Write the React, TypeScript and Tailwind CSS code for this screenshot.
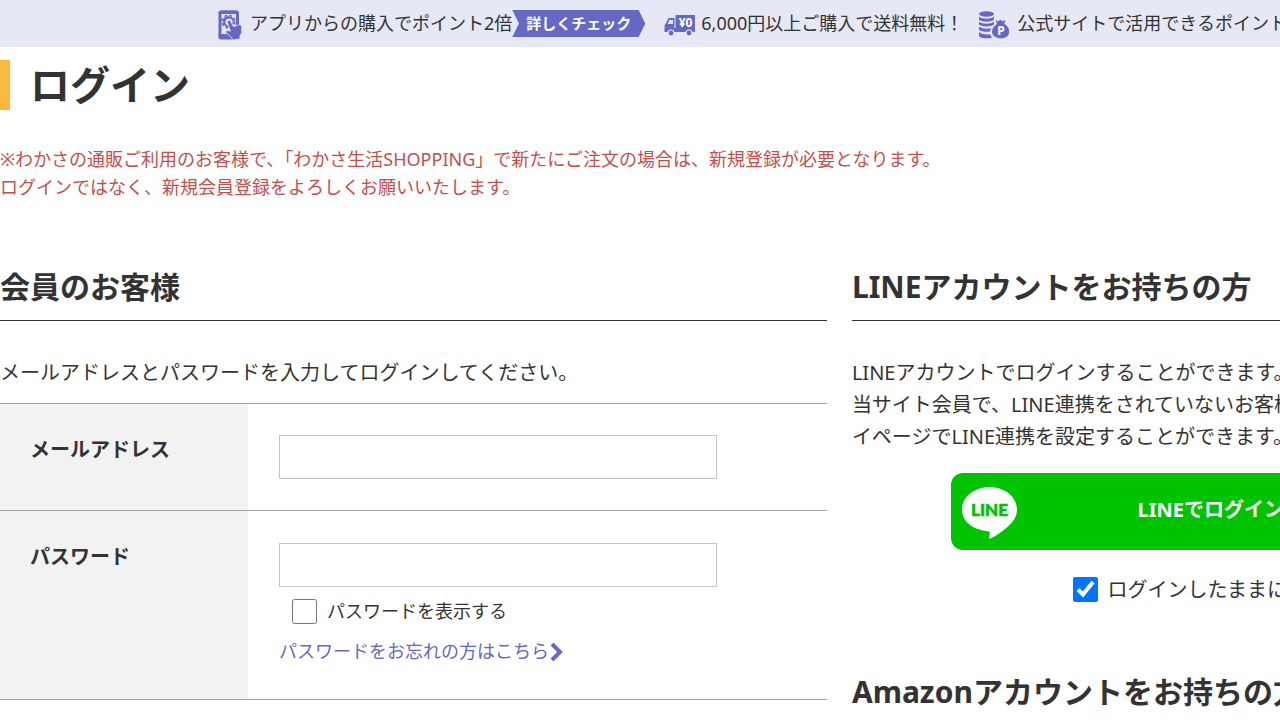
import React from 'react';

const PhoneIcon = () => (
  <svg className="h-8 w-6 shrink-0" viewBox="0 0 24 32" aria-hidden="true">
    <rect x="2" y="4" width="17.500" height="25" rx="2" fill="none" stroke="#6668c4" strokeWidth="3" />
    <path d="M.5 26h15v5.500H3A2.500 2.500 0 0 1 .5 29zM.5 5a2.500 2.500 0 0 1 2.500-2.500h15.500A2.500 2.500 0 0 1 21 5v1H.5z" fill="#6668c4" />
    <circle cx="10.500" cy="13.500" r="5.500" fill="#6668c4" />
    <circle cx="10.500" cy="13.500" r="6.300" fill="none" stroke="#6668c4" strokeWidth="1.600" strokeDasharray="3 1.950" />
    <circle cx="11" cy="14" r="3.600" fill="#e6e8f6" />
    <path
      fill="#6668c4"
      stroke="#e6e8f6"
      strokeWidth=".8"
      d="M9.700 13c.8-1.200 2.300-1 3 .2l2.700 5.300 6-1.800c1.300 0 2 .8 2.200 2l.2 6-1.800 3v3.300l-7 1-2-3-5-4.300c-.8-1.200.3-2.400 1.600-2.200l2.700.6-2.700-8c-.3-.8-.3-1.400.1-2.100z"
    />
  </svg>
);

const TruckIcon = () => (
  <svg className="h-8 w-8 shrink-0" viewBox="-1 0 32 32" aria-hidden="true">
    <path fill="#6668c4" d="M11.500 7H31v17H11.500z" />
    <path fill="#6668c4" d="M10.500 10v14H.5v-6.500l1-1.500 2.500-5a2 2 0 0 1 1.800-1z" />
    <path fill="#6668c4" d="M10 20h3v4h-3z" />
    <path fill="#e6e8f6" d="M5.500 12H9v4H3.500z" />
    <circle cx="7" cy="25" r="3" fill="#6668c4" stroke="#e6e8f6" strokeWidth="1.200" />
    <circle cx="25" cy="25" r="3" fill="#6668c4" stroke="#e6e8f6" strokeWidth="1.200" />
    <text
      x="21.500"
      y="18.500"
      fill="#ffffff"
      fontFamily="Noto Sans, sans-serif"
      fontSize="12"
      fontWeight="700"
      textAnchor="middle"
    >
      ¥0
    </text>
  </svg>
);

const PointIcon = () => (
  <svg className="h-8 w-8 shrink-0" viewBox="-1 0 32 32" aria-hidden="true">
    <g fill="#6668c4">
      <ellipse cx="8.500" cy="6" rx="7.500" ry="2.800" />
      <path d="M1 8.800c3 2.500 12 2.500 15 0v2.900c-3 2.600-12 2.600-15 0z" />
      <path d="M1 13.800c3 2.500 12 2.500 15 0v2.700c-3 2.600-12 2.600-15 0z" />
      <path d="M1 18.800c3 2 8 2.300 12 1.500l-1 3.200c-4 .6-9 .2-11-1.500z" />
      <path d="M1 24.300c3 2 7 2.500 11 2l2 3.500c-5 1-11 .5-13-1.500z" />
      <path d="M17.500 12l2.500 1.300 2.500-1.500 2 1.500 3-1.300-1.300 4c3 1.500 5 4.500 5 7.500 0 4.500-3.200 6.800-8.200 6.800s-9-2.300-9-6.800c0-3 2-6 5-7.500z" />
    </g>
    <text
      x="23"
      y="27"
      fill="#ffffff"
      fontFamily="Noto Sans, sans-serif"
      fontSize="12"
      fontWeight="700"
      textAnchor="middle"
    >
      P
    </text>
  </svg>
);

const LineLogo = () => (
  <svg className="h-14 w-14 shrink-0" viewBox="0 0 56 56" aria-hidden="true">
    <path
      fill="#ffffff"
      d="M28.500 3C43.500 3 56 12.800 56 25.500c0 7-3.500 12-9 17-6 5.500-12 9-17.500 12-1.200.5-1.500-.3-1.300-1.200l.6-4.200c.1-1.200-.3-1.600-1.500-1.800C12.500 46 1 38 1 25.500 1 12.800 13.500 3 28.500 3z"
    />
    <text
      x="28.500"
      y="32"
      fill="#00c300"
      stroke="#00c300"
      strokeWidth=".6"
      fontFamily="Lato, sans-serif"
      fontSize="17"
      fontWeight="900"
      textAnchor="middle"
    >
      LINE
    </text>
  </svg>
);

const SectionTitle = ({ children }: { children: React.ReactNode }) => (
  <h2 className="border-b border-[#333333] pb-[13px] text-[30px] leading-10 font-bold whitespace-nowrap">
    {children}
  </h2>
);

const InfoBar = () => (
  <div className="flex h-[47px] items-center overflow-hidden bg-[#e6e8f6] pl-[218px] text-[18px] whitespace-nowrap">
    <div className="flex shrink-0 items-center">
      <PhoneIcon />
      <span className="ml-2">アプリからの購入でポイント2倍</span>
      <a
        href="#app"
        className="flex h-[27px] items-center bg-[#6668c4] px-[14px] text-[15px] font-bold text-white [clip-path:polygon(0_0,95%_0,100%_50%,95%_100%,0_100%,5%_50%)]"
      >
        詳しくチェック
      </a>
    </div>
    <div className="ml-[18px] flex shrink-0 items-center gap-[6px]">
      <TruckIcon />
      <span>6,000円以上ご購入で送料無料！</span>
    </div>
    <div className="ml-[14px] flex shrink-0 items-center gap-2">
      <PointIcon />
      <span>公式サイトで活用できるポイント</span>
    </div>
  </div>
);

const MemberLogin = () => {
  const [showPassword, setShowPassword] = React.useState(false);

  return (
    <section className="w-[64.6%] shrink-0">
      <SectionTitle>会員のお客様</SectionTitle>
      <p className="mt-9 mb-[14px] leading-8">
        メールアドレスとパスワードを入力してログインしてください。
      </p>

      <form className="border-t border-[#a3a3a3]">
        {/* Mail address */}
        <div className="flex border-b border-[#a3a3a3]">
          <div className="w-[30%] bg-[#f2f2f2] px-[30px] py-[31px]">
            <label htmlFor="email" className="leading-[30px] font-bold">
              メールアドレス
            </label>
          </div>
          <div className="flex-1 px-[31px] py-[31px]">
            <input
              id="email"
              type="email"
              className="block h-11 w-full max-w-[438px] border border-[#c4c4c4] bg-white px-3"
            />
          </div>
        </div>

        {/* Password */}
        <div className="flex border-b border-[#a3a3a3]">
          <div className="w-[30%] bg-[#f2f2f2] px-[30px] py-[31px]">
            <label htmlFor="password" className="leading-[30px] font-bold">
              パスワード
            </label>
          </div>
          <div className="flex-1 px-[31px] py-8 text-[18px]">
            <input
              id="password"
              type={showPassword ? 'text' : 'password'}
              className="block h-11 w-full max-w-[438px] border border-[#c4c4c4] bg-white px-3"
            />
            <label className="mt-3 ml-[13px] flex items-center gap-[10px] leading-[25px]">
              <input
                type="checkbox"
                className="size-[25px]"
                checked={showPassword}
                onChange={(e) => setShowPassword(e.target.checked)}
              />
              パスワードを表示する
            </label>
            <a href="#forgot" className="mt-3 flex items-center leading-[31px] text-[#6668c4]">
              パスワードをお忘れの方はこちら
              <svg className="h-5 w-4" viewBox="1 0 16 20" fill="none" aria-hidden="true">
                <path d="M4 2l8 8-8 8" stroke="#6668c4" strokeWidth="4" />
              </svg>
            </a>
          </div>
        </div>
      </form>
    </section>
  );
};

const LineLogin = () => (
  <section className="w-[56.4%] shrink-0">
    <SectionTitle>LINEアカウントをお持ちの方</SectionTitle>
    <p className="mt-9 leading-8 whitespace-nowrap">
      LINEアカウントでログインすることができます。
      <br />
      当サイト会員で、LINE連携をされていないお客様は、マ
      <br />
      イページでLINE連携を設定することができます。
    </p>
    <button
      type="button"
      className="mx-auto mt-5 flex h-[77px] w-[524px] items-center rounded-xl bg-[#00c300] px-[10px] font-bold text-white"
    >
      <LineLogo />
      <span className="flex-1 pr-[60px] pb-1 text-center">LINEでログイン</span>
    </button>
    <label className="mt-[27px] mr-[26px] flex items-center justify-center gap-[10px] leading-[25px]">
      <input type="checkbox" className="size-[25px] accent-[#0075ff]" defaultChecked />
      ログインしたままにする
    </label>
    <div className="mt-[70px]">
      <SectionTitle>Amazonアカウントをお持ちの方</SectionTitle>
    </div>
  </section>
);

export default function App() {
  return (
    <div className="min-h-screen overflow-hidden bg-white font-['Noto_Sans','Noto_Sans_CJK_JP',sans-serif] text-xl text-[#333333]">
      <InfoBar />
      <main>
        <h1 className="mt-[13px] border-l-[10px] border-[#fdb93e] pl-5 text-[40px] leading-[50px] font-bold">
          ログイン
        </h1>
        <p className="mt-[35px] text-[18px] leading-7 text-[#c1504c]">
          ※わかさの通販ご利用のお客様で、「わかさ生活SHOPPING」で新たにご注文の場合は、新規登録が必要となります。
          <br />
          ログインではなく、新規会員登録をよろしくお願いいたします。
        </p>
        <div className="mt-[66px] flex gap-[25px]">
          <MemberLogin />
          <LineLogin />
        </div>
      </main>
    </div>
  );
}
